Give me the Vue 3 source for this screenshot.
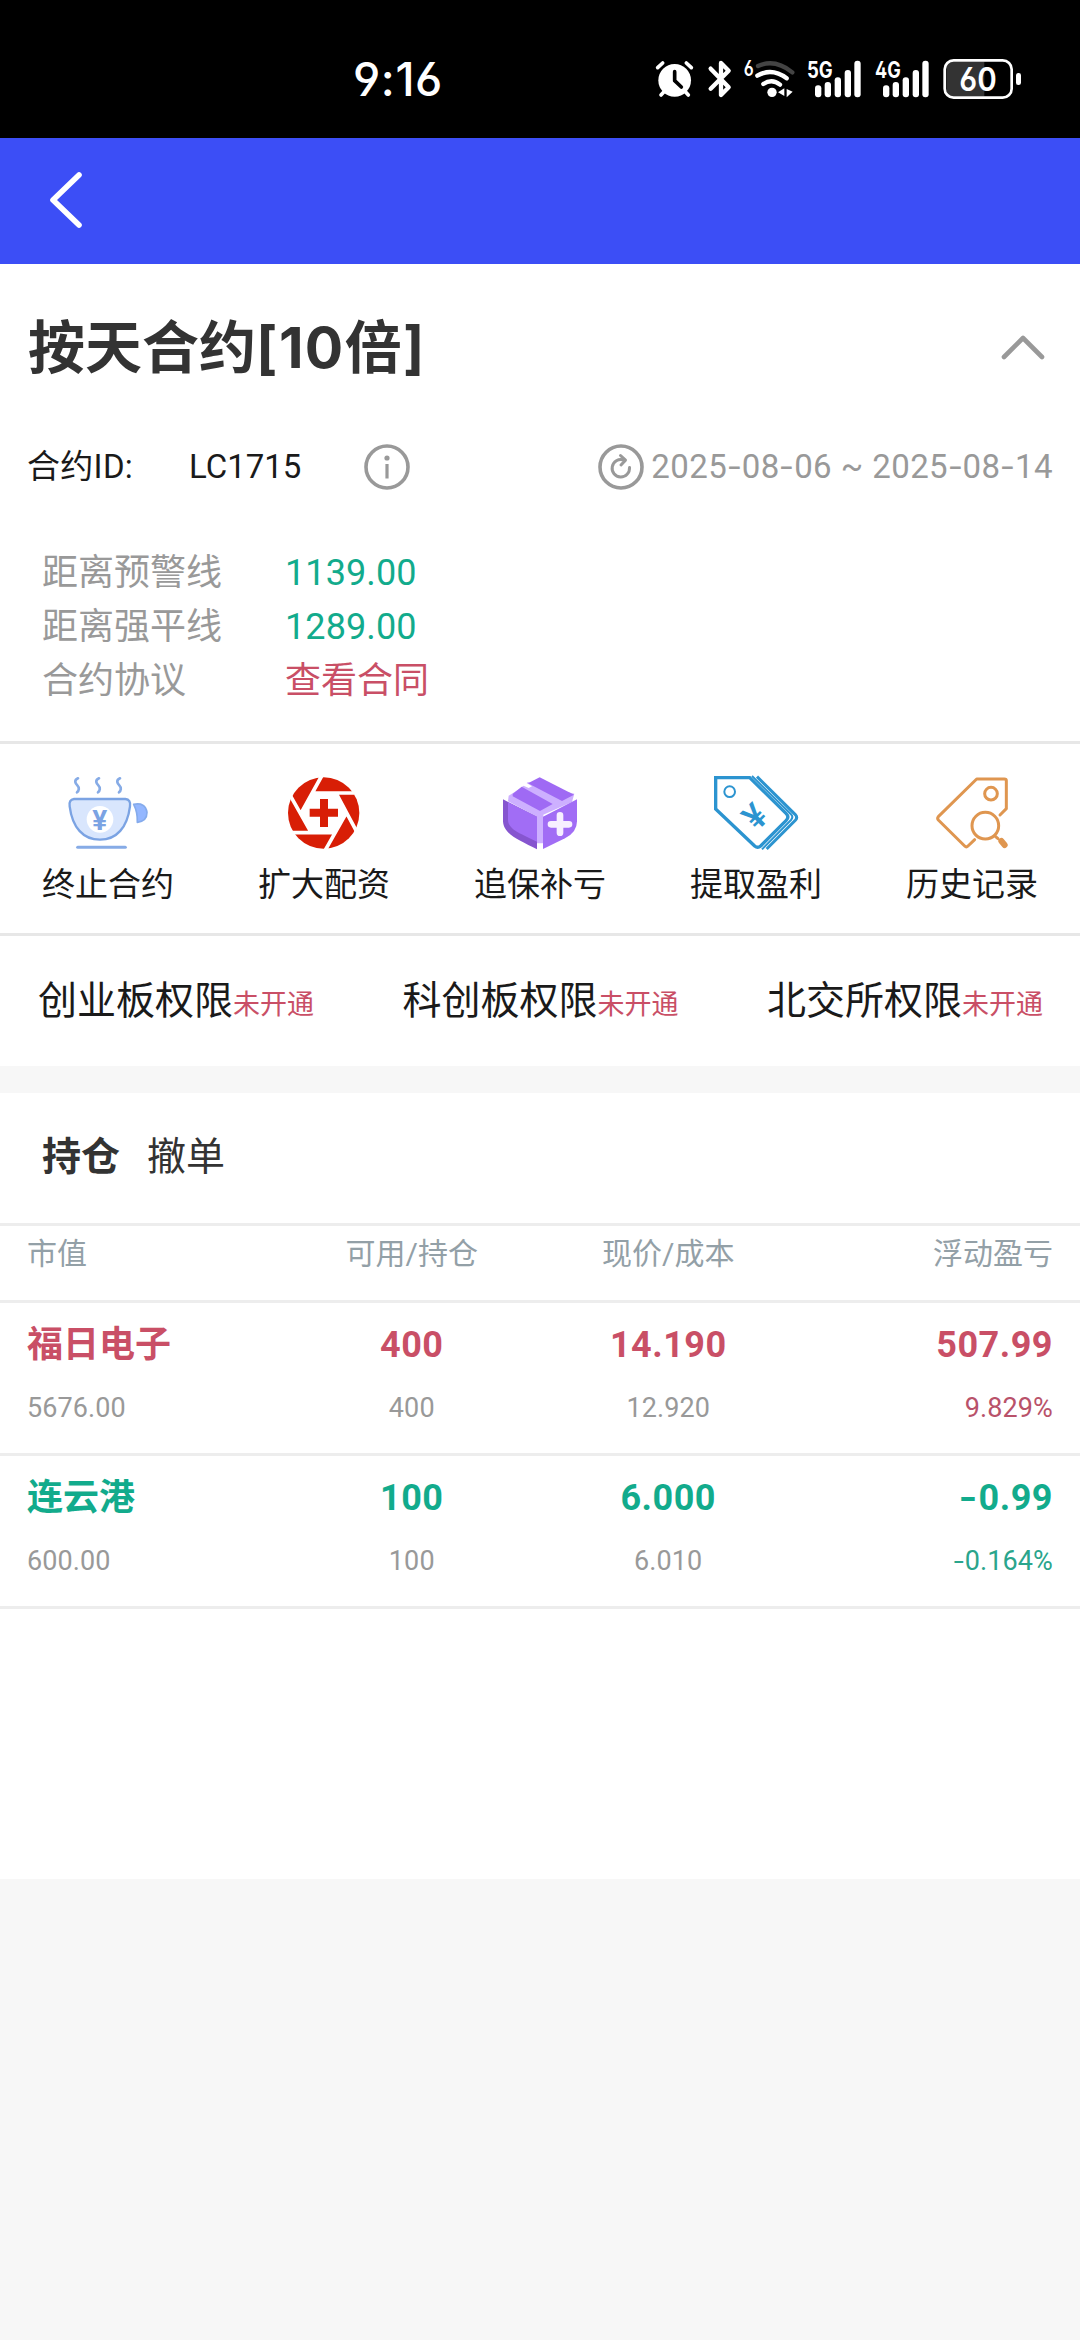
<script setup>
const actions = [
  { icon: 'cup', label: '终止合约' },
  { icon: 'expand', label: '扩大配资' },
  { icon: 'box', label: '追保补亏' },
  { icon: 'profit', label: '提取盈利' },
  { icon: 'history', label: '历史记录' },
]
const rights = ['创业板权限', '科创板权限', '北交所权限']
const heads = ['市值', '可用/持仓', '现价/成本', '浮动盈亏']
const holdings = [
  { tone: 'up', main: ['福日电子', '400', '14.190', '507.99'], sub: ['5676.00', '400', '12.920', '9.829%'] },
  { tone: 'down', main: ['连云港', '100', '6.000', '-0.99'], sub: ['600.00', '100', '6.010', '-0.164%'] },
]
const signalBars = [
  { x: 0, top: 136 },
  { x: 29, top: 126 },
  { x: 59, top: 112 },
  { x: 89, top: 90 },
  { x: 118, top: 62 },
]
</script>

<template>
  <div class="page">
    <header class="status">
      <span class="time">9:16</span>
      <div class="tray">
        <svg class="i-alarm" viewBox="45 57 117 120">
          <circle cx="104" cy="121" r="49" fill="#fff" />
          <g fill="none" stroke="#fff" stroke-width="11" stroke-linecap="round">
            <path d="M53 83 68 69M154 83 139 69M74 153 63 165M134 153 145 165" />
          </g>
          <path d="M104 95V122L124 141" fill="none" stroke="#000" stroke-width="11" stroke-linecap="round" stroke-linejoin="round" />
        </svg>
        <svg class="i-bt" viewBox="204 57 72 120">
          <path d="M212 86 266 142 243 165V69L266 92 212 146" fill="none" stroke="#fff" stroke-width="13" stroke-linecap="round" stroke-linejoin="round" />
        </svg>
        <svg class="i-wifi" viewBox="312 57 156 120">
          <text x="311" y="109" class="t-six" textLength="30" lengthAdjust="spacingAndGlyphs">6</text>
          <g fill="none" stroke="#fff" stroke-width="13" stroke-linecap="round">
            <path d="M354 78Q405 55 457 97" stroke="#444" />
            <path d="M352 107Q396 82 440 115" />
            <path d="M370 132Q396 115 420 134" />
          </g>
          <circle cx="396" cy="157" r="14" fill="#fff" />
          <path d="M433 145V168L414 157ZM440 147V172L458 155Z" fill="#fff" />
        </svg>
        <svg v-for="net in ['5G', '4G']" :key="net" class="i-sig" viewBox="501 57 162 120">
          <rect v-for="b in signalBars" :key="b.x" :x="525 + b.x" :y="b.top" width="19" :height="172 - b.top" rx="9" fill="#fff" />
          <text x="501" y="115" class="t-net" textLength="77" lengthAdjust="spacingAndGlyphs">{{ net }}</text>
        </svg>
        <svg class="i-bat" viewBox="909 57 234 120">
          <path d="M936 65H1033V169H936Q919 169 919 150V84Q919 65 936 65Z" fill="#333" />
          <rect x="914" y="61" width="201" height="112" rx="27" fill="none" stroke="#fff" stroke-width="8" />
          <rect x="1128" y="99" width="15" height="36" rx="7" fill="#fff" />
          <text x="1014" y="153" class="t-bat" text-anchor="middle" textLength="112" lengthAdjust="spacingAndGlyphs">60</text>
        </svg>
      </div>
    </header>

    <nav class="navbar">
      <svg class="back" viewBox="0 0 36 60">
        <path d="M31 5 5 30 31 55" fill="none" stroke="#fff" stroke-width="5.6" stroke-linecap="round" stroke-linejoin="round" />
      </svg>
    </nav>

    <section class="contract">
      <div class="title-row">
        <h1>按天合约<span class="times">[10倍]</span></h1>
        <svg class="fold" viewBox="0 0 44 26">
          <path d="M3 22 22 3 41 22" fill="none" stroke="#999" stroke-width="4.6" stroke-linecap="round" stroke-linejoin="round" />
        </svg>
      </div>

      <div class="id-row">
        <span class="id-label">合约ID:</span>
        <span class="id-value">LC1715</span>
        <svg class="ring" viewBox="0 0 46 46">
          <circle cx="23" cy="23" r="21" fill="none" stroke="#999" stroke-width="3.6" />
          <circle cx="23" cy="14" r="2.6" fill="#999" />
          <path d="M23 20V34.5" stroke="#999" stroke-width="3.2" />
        </svg>
        <span class="period">
          <svg class="ring" viewBox="0 0 46 46">
            <circle cx="23" cy="23" r="21" fill="none" stroke="#999" stroke-width="3.6" />
            <path d="M31.5 23.5A8.7 8.7 0 1 1 25.5 16" fill="none" stroke="#999" stroke-width="3" stroke-linecap="round" />
            <path d="M22.5 11.5 27.5 16.2 23 21" fill="none" stroke="#999" stroke-width="3" stroke-linecap="round" stroke-linejoin="round" />
          </svg>
          <span class="dates">2025<i>-</i>08<i>-</i>06 ~ 2025<i>-</i>08<i>-</i>14</span>
        </span>
      </div>

      <dl class="facts">
        <dt>距离预警线</dt>
        <dd class="num down">1139.00</dd>
        <dt>距离强平线</dt>
        <dd class="num down">1289.00</dd>
        <dt>合约协议</dt>
        <dd class="up">查看合同</dd>
      </dl>
    </section>

    <section class="actions">
      <div v-for="a in actions" :key="a.icon" class="action">
        <svg v-if="a.icon === 'cup'" class="pic" viewBox="99 33 270 252">
          <g fill="none" stroke="#86abe6" stroke-width="8" stroke-linecap="round">
            <path d="M144 55C131 61 136 70 142 76C149 83 147 92 141 97" />
            <path d="M207 55C194 61 199 70 205 76C212 83 210 92 204 97" />
            <path d="M270 55C257 61 262 70 268 76C275 83 273 92 267 97" />
            <path d="M143 262H286" stroke-width="9" />
          </g>
          <path d="M132 117H286Q303 119 300 139C292 202 260 239 210 239C159 239 127 202 119 139Q116 119 132 117Z" fill="#d9e6fd" stroke="#7ba3e3" stroke-width="7" />
          <path d="M311 133Q346 126 351 157Q351 184 322 187Q323 156 311 133Z" fill="#94b7ff" stroke="#85abec" stroke-width="5" stroke-linejoin="round" />
          <circle cx="210" cy="178" r="40" fill="#fff" />
          <text x="209" y="209" text-anchor="middle" class="t-yen">¥</text>
        </svg>
        <svg v-else-if="a.icon === 'expand'" class="pic" viewBox="747 33 270 252">
          <circle cx="881" cy="159" r="107" fill="#d81e06" />
          <path d="M849 99H921L948 159 912 219H842L812 159Z" fill="#fff" />
          <path d="M875 48 812 162M846 99H972M917 97 980 215M950 157 885 272M914 218H786M845 220 781 107" stroke="#fff" stroke-width="11" />
          <path d="M882 117V201M839 158H924" stroke="#d81e06" stroke-width="24" />
        </svg>
        <svg v-else-if="a.icon === 'box'" class="pic" viewBox="105 33 270 252">
          <path d="M146 107 178 87 204 66 343 101 336 126 250 164 250 250 231 250 231 170 144 124Z" fill="#cdb0ff" />
          <path d="M204 70 239 52 342 104 306 123Z" fill="#9f6af4" />
          <path d="M158 102 185 80 278 132 240 153 158 109Z" fill="#9f6af4" />
          <path d="M129 118 231 170V268C178 240 131 224 129 184Z" fill="#8655cf" />
          <path d="M144 126 231 170V245C190 224 144 210 144 180Z" fill="#a16df5" />
          <path d="M351 118 249 170V267L315 235Q351 217 351 184Z" fill="#a16df5" />
          <path d="M300 166V218M273 193H327" stroke="#f7f0ff" stroke-width="20" stroke-linecap="round" />
          <path d="M193 65 216 79 206 84 184 74Z" fill="#fff" />
        </svg>
        <svg v-else-if="a.icon === 'profit'" class="pic" viewBox="753 33 270 252">
          <g fill="none" stroke="#2c94d0" stroke-linejoin="miter">
            <path d="M767 53H869L978 160Q989 171 978 182L902 258Q893 266 884 258L767 147Z" stroke-width="10" />
            <path d="M876 48 993 163Q1001 171 993 180L906 268" stroke-width="6" />
            <path d="M891 50 1006 164Q1014 172 1006 181L920 267" stroke-width="9" />
            <circle cx="809" cy="95" r="16" stroke-width="6" />
          </g>
          <text x="0" y="0" text-anchor="middle" transform="translate(911 195) rotate(-45)" class="t-yen2">¥</text>
        </svg>
        <svg v-else class="pic" viewBox="381 93 270 252">
          <g fill="none" stroke="#df9650" stroke-width="9" stroke-linecap="round" stroke-linejoin="round">
            <path d="M600 225 619 206V122Q619 117 613 117H530L415 230Q411 235 415 240L494 318Q499 323 504 318L524 299" />
            <circle cx="573" cy="161" r="19" />
            <circle cx="556" cy="257" r="40" />
            <path d="M586 289 594 296" />
            <path d="M604 303 614 315" stroke-width="18" />
          </g>
        </svg>
        <span>{{ a.label }}</span>
      </div>
    </section>

    <section class="rights">
      <div v-for="r in rights" :key="r" class="right">{{ r }}<small class="up">未开通</small></div>
    </section>

    <div class="band"></div>

    <section class="positions">
      <div class="tabs">
        <span class="tab active">持仓</span>
        <span class="tab">撤单</span>
      </div>
      <div class="grid head">
        <span v-for="h in heads" :key="h">{{ h }}</span>
      </div>
      <div v-for="(h, n) in holdings" :key="n" class="holding" :class="h.tone">
        <div class="grid main">
          <span v-for="(c, k) in h.main" :key="k"><template v-if="c[0] === '-'"><i>-</i>{{ c.slice(1) }}</template><template v-else>{{ c }}</template></span>
        </div>
        <div class="grid sub">
          <span v-for="(c, k) in h.sub" :key="k"><template v-if="c[0] === '-'"><i>-</i>{{ c.slice(1) }}</template><template v-else>{{ c }}</template></span>
        </div>
      </div>
    </section>
  </div>
</template>

<style>
body {
  background: #f7f7f7;
}
</style>

<style scoped>
.page {
  width: 1080px;
  height: 2340px;
  overflow: hidden;
  background: #f7f7f7;
  font-family: Roboto, "Noto Sans CJK SC", sans-serif;
  color: #1a1a1a;
  box-sizing: border-box;
}
.page * {
  box-sizing: border-box;
}
svg {
  display: block;
  flex: none;
  overflow: visible;
}
i {
  font-style: normal;
  display: inline-block;
  transform: scaleX(1.35);
  margin: 0 0.075em;
}
.up {
  color: #c94f66;
}
.down {
  color: #12ab8c;
}

.status {
  height: 138px;
  background: #000;
  color: #fff;
  display: flex;
  align-items: center;
  justify-content: space-between;
  padding: 20px 59px 0 353px;
}
.time {
  font: 500 46px/60px Inter, sans-serif;
  font-feature-settings: "ss01", "cv03", "cv04";
  letter-spacing: 0.6px;
}
.tray {
  display: flex;
}
.tray svg {
  height: 40px;
}
.i-alarm { width: 39px; }
.i-bt { width: 24px; margin-left: 14px; }
.i-wifi { width: 52px; margin-left: 12px; }
.i-sig { width: 54px; margin-left: 11px; }
.i-sig + .i-sig { margin-left: 14px; }
.i-bat { width: 78px; margin-left: 14px; }
.t-six,
.t-net,
.t-bat {
  fill: #fff;
  font-family: Inter, sans-serif;
  font-feature-settings: "ss01", "cv03", "cv04";
}
.t-six { font-size: 64px; font-weight: 600; }
.t-net { font-size: 67px; font-weight: 700; stroke: #000; stroke-width: 10px; paint-order: stroke; }
.t-bat { font-size: 96px; font-weight: 600; }

.navbar {
  height: 126px;
  background: #3c4ef6;
  display: flex;
  align-items: center;
  padding: 0 0 3px 48px;
}
.back {
  width: 36px;
  height: 60px;
}

.contract {
  height: 480px;
  background: #fff;
  border-bottom: 3px solid #e7e7e7;
}
.title-row {
  display: flex;
  justify-content: space-between;
  align-items: center;
  height: 166px;
  padding: 1px 35px 0 28px;
}
h1 {
  margin: 0;
  font-family: Inter, "Noto Sans CJK SC", sans-serif;
  font-size: 57px;
  line-height: 80px;
  font-weight: 700;
  color: #333;
}
.times {
  letter-spacing: 1.4px;
}
.fold {
  width: 44px;
  height: 26px;
}
.id-row {
  display: flex;
  align-items: center;
  height: 74px;
  padding: 0 27px;
  font-size: 33px;
}
.id-label {
  width: 162px;
  padding-bottom: 6px;
  letter-spacing: 0.3px;
}
.id-value {
  width: 175px;
  padding-bottom: 2px;
}
.ring {
  width: 46px;
  height: 46px;
}
.period {
  margin-left: auto;
  display: flex;
  align-items: center;
  gap: 7px;
  color: #999;
}
.dates {
  padding-bottom: 2px;
  letter-spacing: 0.43px;
  white-space: nowrap;
}
.facts {
  margin: 42px 0 0 42px;
  display: grid;
  grid-template-columns: 243px auto;
  grid-auto-rows: 54px;
  font-size: 36px;
  line-height: 54px;
}
dt {
  color: #999;
}
dd {
  margin: 0;
}
.num {
  letter-spacing: 0.1px;
}

.actions {
  height: 192px;
  background: #fff;
  border-bottom: 3px solid #e7e7e7;
  display: flex;
  padding-top: 27px;
}
.action {
  flex: 1;
  display: flex;
  flex-direction: column;
  align-items: center;
  font-size: 33px;
  line-height: 50px;
  gap: 5px;
}
.pic {
  width: 90px;
  height: 84px;
}
.t-yen { font: 700 84px Roboto, sans-serif; fill: #7ba3e3; }
.t-yen2 { font: 500 106px Roboto, sans-serif; fill: #2c94d0; }

.rights {
  height: 130px;
  background: #fff;
  display: flex;
  justify-content: space-between;
  align-items: center;
  padding: 0 37px 9px 38px;
  font-size: 39px;
}
.right {
  white-space: nowrap;
}
small {
  font-size: 27px;
}
.band {
  height: 27px;
}

.positions {
  height: 786px;
  background: #fff;
}
.tabs {
  height: 133px;
  border-bottom: 3px solid #ededed;
  display: flex;
  align-items: center;
  gap: 27px;
  padding: 0 42px 10px;
  font-size: 39px;
  color: #333;
}
.active {
  font-weight: 700;
}
.grid {
  display: grid;
  grid-template-columns: repeat(4, 1fr);
  padding: 0 27px;
  text-align: center;
}
.grid span:first-child {
  text-align: left;
}
.grid span:last-child {
  text-align: right;
}
.head {
  height: 77px;
  border-bottom: 3px solid #ededed;
  font-size: 30px;
  line-height: 56px;
  color: #93a0a7;
}
.holding {
  height: 153px;
  border-bottom: 3px solid #ededed;
  padding-top: 12px;
}
.main {
  font-size: 36px;
  line-height: 60px;
  font-weight: 700;
  letter-spacing: 0.5px;
}
.main span:first-child {
  letter-spacing: 0;
}
.sub {
  font-size: 27px;
  line-height: 66px;
  color: #999;
  letter-spacing: 0.1px;
}
.up .sub span:last-child {
  color: #b9526a;
}
.down .sub span:last-child {
  color: #2aa58c;
}
</style>
